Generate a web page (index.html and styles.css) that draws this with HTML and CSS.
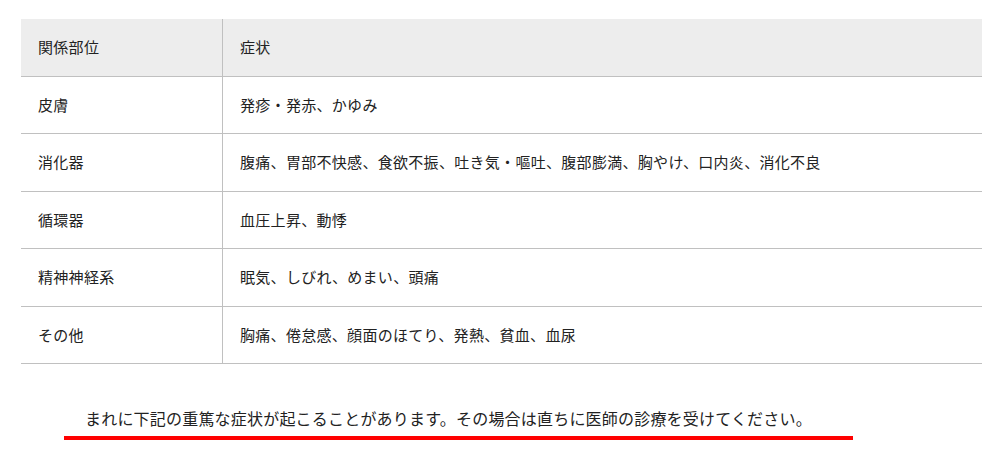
FILE: index.html
```html
<!DOCTYPE html>
<html lang="ja">
<head>
<meta charset="utf-8">
<link rel="stylesheet" href="styles.css">
</head>
<body>
<div class="page">
  <table class="sym-table">
    <thead>
      <tr><th class="c1">関係部位</th><th class="c2">症状</th></tr>
    </thead>
    <tbody>
      <tr><td class="c1">皮膚</td><td class="c2">発疹・発赤、かゆみ</td></tr>
      <tr><td class="c1">消化器</td><td class="c2">腹痛、胃部不快感、食欲不振、吐き気・嘔吐、腹部膨満、胸やけ、口内炎、消化不良</td></tr>
      <tr><td class="c1">循環器</td><td class="c2">血圧上昇、動悸</td></tr>
      <tr><td class="c1">精神神経系</td><td class="c2">眠気、しびれ、めまい、頭痛</td></tr>
      <tr><td class="c1">その他</td><td class="c2">胸痛、倦怠感、顔面のほてり、発熱、貧血、血尿</td></tr>
    </tbody>
  </table>
  <p class="note">まれに下記の重篤な症状が起こることがあります。その場合は直ちに医師の診療を受けてください。</p>
</div>
</body>
</html>
```

FILE: styles.css
```css
html, body {
  margin: 0;
  padding: 0;
  background: #fff;
}
body {
  font-family: "Noto Sans CJK JP", "Noto Sans", sans-serif;
  color: #222;
}
.page {
  padding: 19px 18px 0 21px;
}
.sym-table {
  width: 961px;
  border-collapse: collapse;
  font-size: 15px;
  line-height: 22.5px;
  letter-spacing: 0.3px;
}
.sym-table th,
.sym-table td {
  text-align: left;
  font-weight: normal;
  padding: 17px 16px 17px 17px;
  border-bottom: 1px solid #c0c0c0;
}
.sym-table th {
  background: #ededed;
}
.sym-table .c1 {
  width: 168px;
  border-right: 1px solid #c0c0c0;
}
.note {
  margin: 41px 0 0 43px;
  width: 768px;
  padding: 0 0 5px 21px;
  font-size: 16px;
  line-height: 26px;
  letter-spacing: 0.2px;
  white-space: nowrap;
  border-bottom: 4px solid #ff0000;
}
```
